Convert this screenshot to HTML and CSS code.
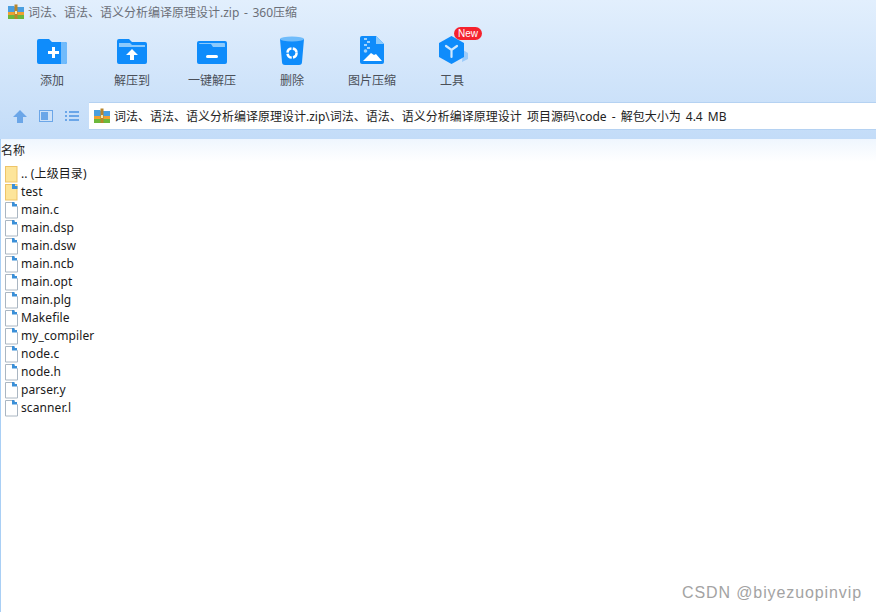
FILE: index.html
```html
<!DOCTYPE html>
<html lang="zh-CN">
<head>
  <meta charset="UTF-8">
  <title>360压缩</title>
  <link rel="stylesheet" href="styles.css">
</head>
<body>

<svg class="defs" width="0" height="0">
  <symbol id="zip" viewBox="0 0 16 16">
    <path d="M0 2h6l1 1h9v5H0z" fill="#4a9fe0"/>
    <path d="M0 8h16v3H0z" fill="#f0a030"/>
    <path d="M0 11h16v4H0z" fill="#6cb83c"/>
    <rect x="6.500" y="0.500" width="3" height="14.500" fill="#b8862c"/>
    <rect x="7" y="7" width="2" height="3" fill="#fbe9a8"/>
  </symbol>
  <symbol id="file" viewBox="0 0 14 17">
    <path d="M0.500 0.500h8l4 4v11.500h-12z" fill="#fff" stroke="#aab6c2"/>
    <path d="M7 0h2.500v2H12v2.500h-5z" fill="#3a8fd8"/>
  </symbol>
  <symbol id="folder" viewBox="0 0 14 17">
    <rect x="0.500" y="0.500" width="11.500" height="15.500" fill="#fde59a" stroke="#eec468"/>
  </symbol>
  <symbol id="folderfile" viewBox="0 0 14 17">
    <rect x="0.500" y="0.500" width="11.500" height="15.500" fill="#fde59a" stroke="#eec468"/>
    <path d="M7 0h3v2h2.500v3H7z" fill="#3a8fd8"/>
  </symbol>
</svg>

<div class="app">
  <header class="top">
    <div class="titlebar">
      <svg class="zip-icon"><use href="#zip"/></svg>
      <span>词法、语法、语义分析编译原理设计.zip - 360压缩</span>
    </div>

    <div class="toolbar">
      <div class="tool">
        <svg class="tool-icon" viewBox="0 0 32 32">
          <path d="M1 5a2 2 0 0 1 2-2h10l3 3h13a2 2 0 0 1 2 2v18a2 2 0 0 1-2 2H3a2 2 0 0 1-2-2z" fill="#0f8cfb"/>
          <path d="M25 6h4a2 2 0 0 1 2 2v18a2 2 0 0 1-2 2h-4z" fill="#71bbfb"/>
          <path d="M12 15h4v-4h3v4h4v3h-4v4h-3v-4h-4z" fill="#fff"/>
        </svg>
        <span>添加</span>
      </div>
      <div class="tool">
        <svg class="tool-icon" viewBox="0 0 32 32">
          <path d="M1 5a2 2 0 0 1 2-2h10l3 3h13a2 2 0 0 1 2 2v18a2 2 0 0 1-2 2H3a2 2 0 0 1-2-2z" fill="#0f8cfb"/>
          <path d="M3 7h11l2 2h13v2H3z" fill="#8ccafc"/>
          <path d="M16 13l6 6h-4v5h-4v-5h-4z" fill="#fff"/>
        </svg>
        <span>解压到</span>
      </div>
      <div class="tool">
        <svg class="tool-icon" viewBox="0 0 32 32">
          <rect x="1" y="5" width="30" height="23" rx="2" fill="#0f8cfb"/>
          <path d="M3 8h12l2 3h12V8a1 1 0 0 0-1-1H4a1 1 0 0 0-1 1z" fill="#8ccafc"/>
          <rect x="10" y="19" width="12" height="3" rx="1.500" fill="#fff"/>
        </svg>
        <span>一键解压</span>
      </div>
      <div class="tool">
        <svg class="tool-icon" viewBox="0 0 32 32">
          <path d="M4 3l2 23a3 3 0 0 0 3 3h14a3 3 0 0 0 3-3l2-23z" fill="#0f8cfb"/>
          <ellipse cx="16" cy="3" rx="12" ry="2.500" fill="#6fbcfb"/>
          <circle cx="16" cy="17" r="4.600" fill="none" stroke="#fff" stroke-width="2.400" stroke-dasharray="6 1.300"/>
        </svg>
        <span>删除</span>
      </div>
      <div class="tool">
        <svg class="tool-icon" viewBox="0 0 32 32">
          <path d="M6 0h14l8 8v18a2 2 0 0 1-2 2H6a2 2 0 0 1-2-2V2a2 2 0 0 1 2-2z" fill="#0f8cfb"/>
          <path d="M20 0l8 8h-8z" fill="#8ccafc"/>
          <path d="M8 2h3v2H8zM11 5h3v2h-3zM8 8h3v2H8zM11 11h3v2h-3z" fill="#9fd2fd"/>
          <circle cx="9.500" cy="15" r="1.800" fill="#9fd2fd"/>
          <path d="M7 25l8-8 3 2 2-1 6 7z" fill="#fff"/>
        </svg>
        <span>图片压缩</span>
      </div>
      <div class="tool">
        <svg class="tool-icon" viewBox="0 0 32 32">
          <path d="M27 14l5 3v6l-6 3z" fill="#9ccbfa"/>
          <path d="M15.500 0L28 7v14l-12.500 7L3 21V7z" fill="#0f8cfb"/>
          <path d="M10 10l5.500 4 5.500-4M15.500 14v7" fill="none" stroke="#cfe8fe" stroke-width="2.200" stroke-linecap="round"/>
        </svg>
        <span>工具</span>
        <b class="badge">New</b>
      </div>
    </div>

    <div class="addressrow">
      <div class="nav-icons">
        <svg width="14" height="13" viewBox="0 0 14 13"><path d="M7 0l7 7h-4v6H4V7H0z" fill="#6ba6e8"/></svg>
        <svg width="14" height="12" viewBox="0 0 14 12"><rect x="0.500" y="0.500" width="13" height="11" fill="#cfe2f8" stroke="#6ba6e8"/><rect x="2" y="2" width="7" height="8" fill="#6ba6e8"/></svg>
        <svg width="14" height="10" viewBox="0 0 14 10"><path d="M0 0h2v2H0zM4 0h10v2H4zM0 4h2v2H0zM4 4h10v2H4zM0 8h2v2H0zM4 8h10v2H4z" fill="#6ba6e8"/></svg>
      </div>
      <div class="address">
        <svg class="zip-icon"><use href="#zip"/></svg>
        <span>词法、语法、语义分析编译原理设计.zip\词法、语法、语义分析编译原理设计 项目源码\code - 解包大小为 4.4 MB</span>
      </div>
    </div>
  </header>

  <div class="colhead">名称</div>

  <ul class="files">
    <li><svg class="ficon"><use href="#folder"/></svg>.. (上级目录)</li>
    <li><svg class="ficon"><use href="#folderfile"/></svg>test</li>
    <li><svg class="ficon"><use href="#file"/></svg>main.c</li>
    <li><svg class="ficon"><use href="#file"/></svg>main.dsp</li>
    <li><svg class="ficon"><use href="#file"/></svg>main.dsw</li>
    <li><svg class="ficon"><use href="#file"/></svg>main.ncb</li>
    <li><svg class="ficon"><use href="#file"/></svg>main.opt</li>
    <li><svg class="ficon"><use href="#file"/></svg>main.plg</li>
    <li><svg class="ficon"><use href="#file"/></svg>Makefile</li>
    <li><svg class="ficon"><use href="#file"/></svg>my_compiler</li>
    <li><svg class="ficon"><use href="#file"/></svg>node.c</li>
    <li><svg class="ficon"><use href="#file"/></svg>node.h</li>
    <li><svg class="ficon"><use href="#file"/></svg>parser.y</li>
    <li><svg class="ficon"><use href="#file"/></svg>scanner.l</li>
  </ul>

  <div class="watermark">CSDN @biyezuopinvip</div>
</div>

</body>
</html>
```

FILE: styles.css
```css
html, body {
  margin: 0;
  padding: 0;
  height: 100%;
}
body {
  font-family: "Noto Sans", "Noto Sans CJK SC", sans-serif;
  font-size: 12px;
  color: #1a1a1a;
  background: #fff;
  overflow: hidden;
}
.defs {
  position: absolute;
}
.app {
  position: relative;
  height: 612px;
  border-left: 1px solid #a9cff5;
  box-sizing: border-box;
}
.top {
  height: 139px;
  margin-left: -1px;
  background: linear-gradient(#e2effd, #c3dcf8);
}
.titlebar {
  height: 23px;
  display: flex;
  align-items: center;
  gap: 4px;
  padding-left: 8px;
  font-size: 12px;
  word-spacing: 1.5px;
  color: #6b6f78;
}
.zip-icon {
  width: 16px;
  height: 16px;
  flex: none;
}
.toolbar {
  display: flex;
  height: 79px;
  padding-left: 12px;
}
.tool {
  position: relative;
  width: 80px;
  display: flex;
  flex-direction: column;
  align-items: center;
  padding-top: 13px;
  box-sizing: border-box;
  color: #4a4f58;
}
.tool-icon {
  width: 32px;
  height: 32px;
  margin-bottom: 4px;
}
.tool span {
  line-height: 18px;
}
.badge {
  position: absolute;
  top: 4px;
  left: 42px;
  padding: 0 4px;
  border-radius: 7px;
  background: #f5222d;
  color: #fff;
  font: 10px/13px "Liberation Sans", sans-serif;
}
.addressrow {
  display: flex;
  align-items: center;
  height: 28px;
}
.nav-icons {
  width: 89px;
  flex: none;
  display: flex;
  align-items: center;
  gap: 12px;
  padding-left: 13px;
  box-sizing: border-box;
}
.address {
  flex: 1;
  height: 28px;
  display: flex;
  align-items: center;
  gap: 4px;
  padding-left: 5px;
  background: #fff;
  border-top: 1px solid #b5d2f2;
  border-bottom: 1px solid #b5d2f2;
  box-sizing: border-box;
  white-space: nowrap;
  word-spacing: 2px;
  color: #222;
}
.colhead {
  height: 23px;
  line-height: 24px;
  background: linear-gradient(#eff6fe, #fff);
  color: #222;
}
.files {
  list-style: none;
  margin: 3px 0 0;
  padding: 0 0 0 4px;
}
.files li {
  height: 18px;
  display: flex;
  align-items: center;
  gap: 2px;
  line-height: 18px;
  letter-spacing: 0.1px;
}
.ficon {
  width: 14px;
  height: 17px;
  flex: none;
}
.watermark {
  position: absolute;
  right: 14px;
  bottom: 8px;
  font: 16px/22px "Liberation Sans", sans-serif;
  letter-spacing: 0.9px;
  color: #a3a3a3;
}
```
